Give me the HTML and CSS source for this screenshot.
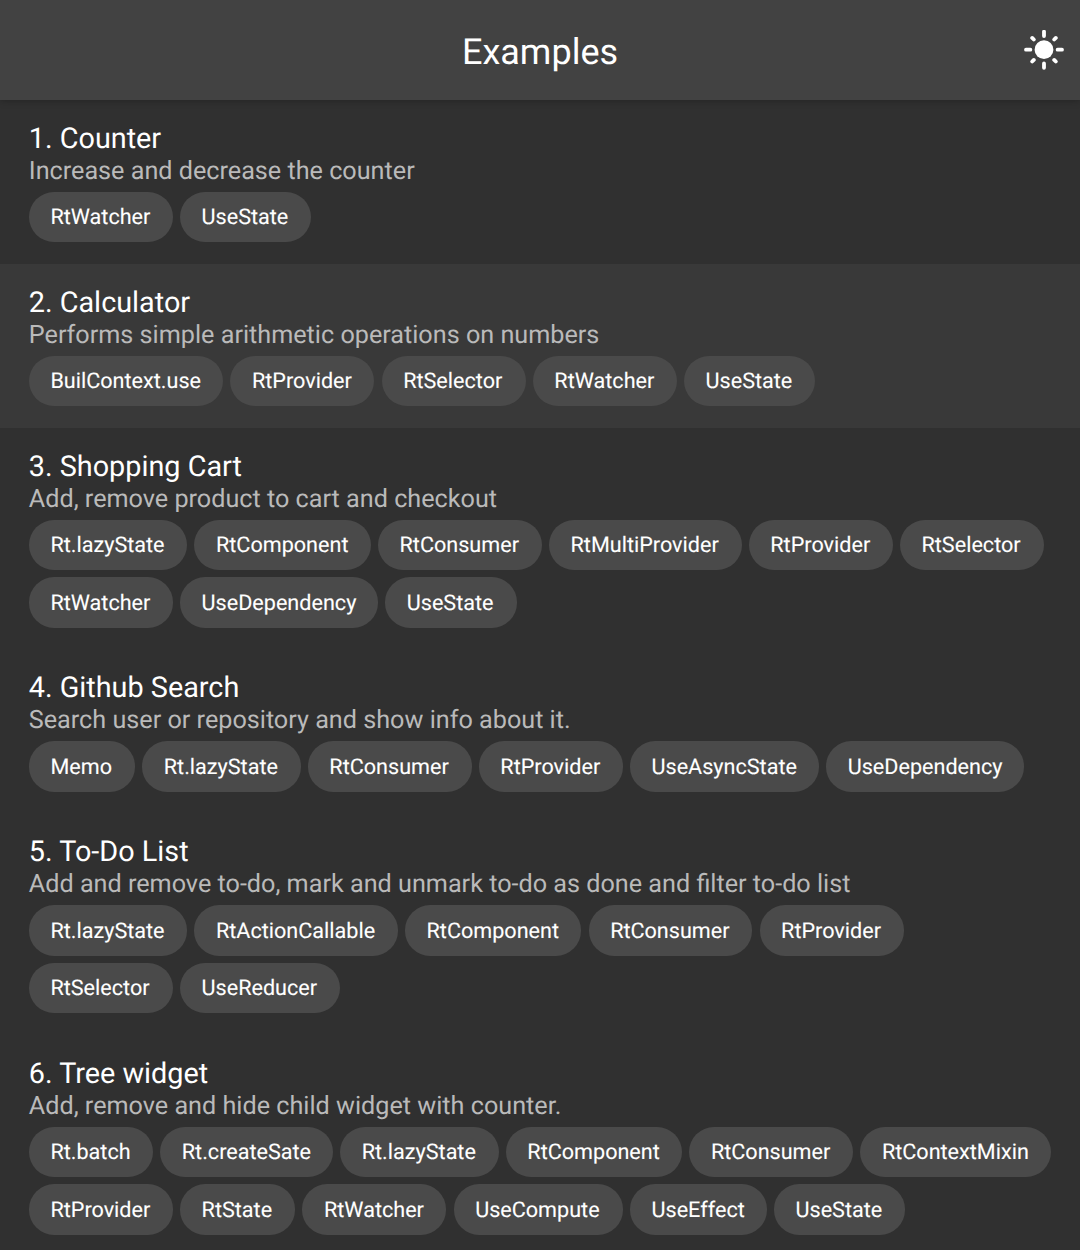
FILE: index.html
```html
<!DOCTYPE html>
<html lang="en">
<head>
<meta charset="utf-8">
<title>Examples</title>
<link rel="stylesheet" href="styles.css">
</head>
<body>
<header class="app-bar">
  <h1 class="app-title">Examples</h1>
  <button class="theme-toggle" aria-label="Toggle theme">
    <svg class="sun" viewBox="0 0 40 40">
      <circle cx="20" cy="19.7" r="9.4" fill="currentColor"/>
      <path d="M20 1.6v4.4M20 33.4v4.4M2 19.7h4.4M33.6 19.7h4.4M8.2 7.9l1.6 1.6M30.2 29.9l1.6 1.6M31.8 7.9l-1.6 1.6M9.8 29.9l-1.6 1.6" fill="none" stroke="currentColor" stroke-width="3.8" stroke-linecap="round"/>
    </svg>
  </button>
</header>
<main class="list">
  <section class="item">
    <h2 class="title">1. Counter</h2>
    <p class="subtitle">Increase and decrease the counter</p>
    <div class="chips"><span class="chip">RtWatcher</span><span class="chip">UseState</span></div>
  </section>
  <section class="item item-hover">
    <h2 class="title">2. Calculator</h2>
    <p class="subtitle">Performs simple arithmetic operations on numbers</p>
    <div class="chips"><span class="chip">BuilContext.use</span><span class="chip">RtProvider</span><span class="chip">RtSelector</span><span class="chip">RtWatcher</span><span class="chip">UseState</span></div>
  </section>
  <section class="item">
    <h2 class="title">3. Shopping Cart</h2>
    <p class="subtitle">Add, remove product to cart and checkout</p>
    <div class="chips"><span class="chip">Rt.lazyState</span><span class="chip">RtComponent</span><span class="chip">RtConsumer</span><span class="chip">RtMultiProvider</span><span class="chip">RtProvider</span><span class="chip">RtSelector</span><span class="chip">RtWatcher</span><span class="chip">UseDependency</span><span class="chip">UseState</span></div>
  </section>
  <section class="item">
    <h2 class="title">4. Github Search</h2>
    <p class="subtitle">Search user or repository and show info about it.</p>
    <div class="chips"><span class="chip">Memo</span><span class="chip">Rt.lazyState</span><span class="chip">RtConsumer</span><span class="chip">RtProvider</span><span class="chip">UseAsyncState</span><span class="chip">UseDependency</span></div>
  </section>
  <section class="item">
    <h2 class="title">5. To-Do List</h2>
    <p class="subtitle">Add and remove to-do, mark and unmark to-do as done and filter to-do list</p>
    <div class="chips"><span class="chip">Rt.lazyState</span><span class="chip">RtActionCallable</span><span class="chip">RtComponent</span><span class="chip">RtConsumer</span><span class="chip">RtProvider</span><span class="chip">RtSelector</span><span class="chip">UseReducer</span></div>
  </section>
  <section class="item">
    <h2 class="title">6. Tree widget</h2>
    <p class="subtitle">Add, remove and hide child widget with counter.</p>
    <div class="chips"><span class="chip">Rt.batch</span><span class="chip">Rt.createSate</span><span class="chip">Rt.lazyState</span><span class="chip">RtComponent</span><span class="chip">RtConsumer</span><span class="chip">RtContextMixin</span><span class="chip">RtProvider</span><span class="chip">RtState</span><span class="chip">RtWatcher</span><span class="chip">UseCompute</span><span class="chip">UseEffect</span><span class="chip">UseState</span></div>
  </section>
</main>
<script src="chips.js"></script>
</body>
</html>
```
FILE: styles.css
```css
* {
  box-sizing: border-box;
}

body {
  margin: 0;
  height: 1250px;
  overflow: hidden;
  background: #303030;
  color: #fff;
  font-family: Roboto, sans-serif;
  text-rendering: geometricPrecision;
  -webkit-font-smoothing: antialiased;
}

.app-bar {
  display: grid;
  grid-template-columns: 1fr auto 1fr;
  align-items: center;
  height: 99.8px;
  padding: 0 16px;
  background: #424242;
  box-shadow: 0 1px 7px rgba(0, 0, 0, 0.25);
}

.app-title {
  grid-column: 2;
  margin: 0;
  padding-top: 3.4px;
  font-size: 36px;
  line-height: 42px;
  font-weight: 400;
}

.theme-toggle {
  justify-self: end;
  width: 40px;
  height: 40px;
  padding: 0;
  border: 0;
  background: none;
  color: #fff;
}

.sun {
  display: block;
  width: 40px;
  height: 40px;
}

.item {
  padding: 21.1px 28.8px 21.6px;
}

.item-hover {
  background: #393939;
}

.title {
  margin: 0;
  font-size: 28.8px;
  line-height: 36px;
  font-weight: 400;
}

.subtitle {
  margin: 0 0 4.9px;
  font-size: 25.2px;
  line-height: 30px;
  color: #bababa;
}

.chips {
  display: flex;
  flex-wrap: wrap;
  gap: 7.2px;
}

.chip {
  flex: none;
  height: 50.4px;
  padding: 13.3px 21.6px 0;
  border-radius: 25.2px;
  background: #4a4a4a;
  font-size: 21.6px;
  line-height: 26px;
  white-space: nowrap;
  -webkit-text-stroke: 0.1px currentColor;
}
```
FILE: chips.js
```js
// Round chip widths up to whole layout units so the rows share one grid.
const UNIT = 1.8;
const chips = [...document.querySelectorAll('.chip')];
const widths = chips.map((chip) => chip.getBoundingClientRect().width);
chips.forEach((chip, i) => {
  chip.style.width = `${Math.ceil(widths[i] / UNIT) * UNIT}px`;
});
```
